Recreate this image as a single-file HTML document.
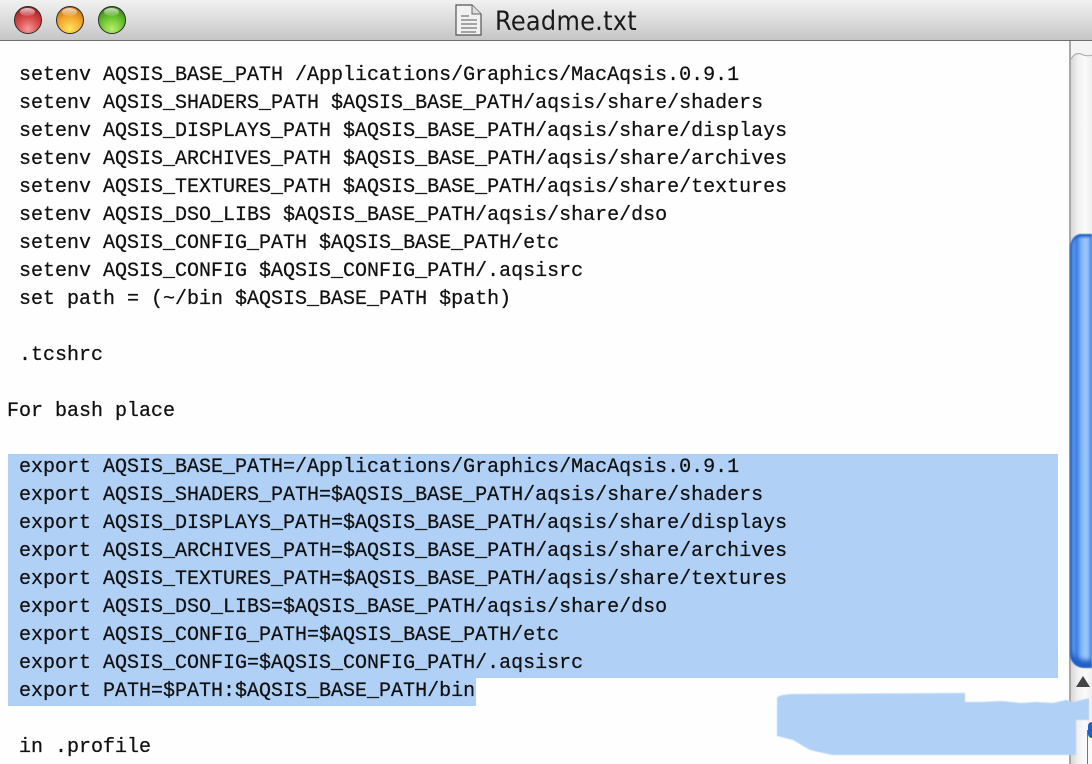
<!DOCTYPE html>
<html><head><meta charset="utf-8">
<style>
html,body{margin:0;padding:0;background:#fff;}
#w{position:relative;width:1092px;height:764px;overflow:hidden;background:#fefefe;}
#t{position:absolute;left:0;top:0;width:1092px;height:40px;background:linear-gradient(#f0f0f0 0,#ededed 10%,#dedede 45%,#cfcfcf 80%,#c6c6c6 100%);border-bottom:1px solid #6e6e6e;}
.b{position:absolute;top:6px;width:28px;height:28px;border-radius:50%;box-sizing:border-box;border:1.5px solid #2b2b2b;overflow:hidden;filter:blur(.3px);}
.b i{position:absolute;left:5px;top:1px;width:15px;height:8px;border-radius:50%;background:linear-gradient(rgba(255,255,255,.75),rgba(255,255,255,.1));}
.l{position:absolute;left:0;font:20px/28px "Liberation Mono",monospace;color:#111;white-space:pre;height:28px;-webkit-text-stroke:.25px #111;filter:blur(.35px);}
.s{position:absolute;background:#b1d0f6;}
#title{position:absolute;left:495px;top:5px;font:27px/34px "DejaVu Sans",sans-serif;color:#1a1a1a;letter-spacing:.3px;transform-origin:0 0;transform:scaleX(.89);filter:blur(.3px);}
</style></head><body><div id="w">
<div id="t"></div>
<div class="b" style="left:14px;background:radial-gradient(circle at 50% 85%,#f49a98 0,#d94a4a 45%,#9c1c20 88%);"><i></i></div>
<div class="b" style="left:56px;background:radial-gradient(circle at 50% 85%,#ffe25e 0,#f2a52e 50%,#b86a10 90%);"><i></i></div>
<div class="b" style="left:98px;background:radial-gradient(circle at 50% 85%,#b6ee6a 0,#66bf2c 50%,#2f7d10 90%);"><i></i></div>
<svg style="position:absolute;left:454px;top:4px" width="29" height="33" viewBox="0 0 29 33"><path d="M2 1H18L27 10V31H2Z" fill="#f1f1f1" stroke="#555" stroke-width="1.2"/><path d="M18 1V10H27" fill="#ddd" stroke="#666"/><path d="M7 12H15M7 16H23M7 20H23M7 24H23M7 28H22" stroke="#777" stroke-width="1.3"/></svg>
<div id="title">Readme.txt</div>

<div class="s" style="left:8px;top:454px;width:1050px;height:224px"></div>
<div class="s" style="left:8px;top:678px;width:468px;height:28px"></div>

<div class="l" style="top:62px;left:19px">setenv AQSIS_BASE_PATH /Applications/Graphics/MacAqsis.0.9.1</div>
<div class="l" style="top:90px;left:19px">setenv AQSIS_SHADERS_PATH $AQSIS_BASE_PATH/aqsis/share/shaders</div>
<div class="l" style="top:118px;left:19px">setenv AQSIS_DISPLAYS_PATH $AQSIS_BASE_PATH/aqsis/share/displays</div>
<div class="l" style="top:146px;left:19px">setenv AQSIS_ARCHIVES_PATH $AQSIS_BASE_PATH/aqsis/share/archives</div>
<div class="l" style="top:174px;left:19px">setenv AQSIS_TEXTURES_PATH $AQSIS_BASE_PATH/aqsis/share/textures</div>
<div class="l" style="top:202px;left:19px">setenv AQSIS_DSO_LIBS $AQSIS_BASE_PATH/aqsis/share/dso</div>
<div class="l" style="top:230px;left:19px">setenv AQSIS_CONFIG_PATH $AQSIS_BASE_PATH/etc</div>
<div class="l" style="top:258px;left:19px">setenv AQSIS_CONFIG $AQSIS_CONFIG_PATH/.aqsisrc</div>
<div class="l" style="top:286px;left:19px">set path = (~/bin $AQSIS_BASE_PATH $path)</div>
<div class="l" style="top:342px;left:19px">.tcshrc</div>
<div class="l" style="top:398px;left:7px">For bash place</div>
<div class="l" style="top:454px;left:19px">export AQSIS_BASE_PATH=/Applications/Graphics/MacAqsis.0.9.1</div>
<div class="l" style="top:482px;left:19px">export AQSIS_SHADERS_PATH=$AQSIS_BASE_PATH/aqsis/share/shaders</div>
<div class="l" style="top:510px;left:19px">export AQSIS_DISPLAYS_PATH=$AQSIS_BASE_PATH/aqsis/share/displays</div>
<div class="l" style="top:538px;left:19px">export AQSIS_ARCHIVES_PATH=$AQSIS_BASE_PATH/aqsis/share/archives</div>
<div class="l" style="top:566px;left:19px">export AQSIS_TEXTURES_PATH=$AQSIS_BASE_PATH/aqsis/share/textures</div>
<div class="l" style="top:594px;left:19px">export AQSIS_DSO_LIBS=$AQSIS_BASE_PATH/aqsis/share/dso</div>
<div class="l" style="top:622px;left:19px">export AQSIS_CONFIG_PATH=$AQSIS_BASE_PATH/etc</div>
<div class="l" style="top:650px;left:19px">export AQSIS_CONFIG=$AQSIS_CONFIG_PATH/.aqsisrc</div>
<div class="l" style="top:678px;left:19px">export PATH=$PATH:$AQSIS_BASE_PATH/bin</div>
<div class="l" style="top:734px;left:19px">in .profile</div>

<div style="position:absolute;left:1069px;top:41px;width:23px;height:723px;border-left:2px solid #a8a8a8;box-sizing:border-box;background:linear-gradient(90deg,#d8d8d8,#f2f2f2 35%,#fafafa 70%,#eee);"></div>
<svg style="position:absolute;left:1071px;top:41px" width="21" height="20"><path d="M0 18Q4 10 10 12Q16 15 21 13V0H0Z" fill="#f4f4f4" stroke="none"/><path d="M0 18Q4 11 10 13Q16 16 21 14" fill="none" stroke="#aaa"/></svg>
<div style="position:absolute;left:1070px;top:234px;width:22px;height:434px;border-radius:11px 0 0 14px/14px 0 0 14px;background:linear-gradient(90deg,#1a56b8 0,#5f9cf0 14%,#3c7fe2 30%,#8abaf5 55%,#9cc8f8 75%,#6aa6ee 100%);box-shadow:inset 0 3px 2px #2463c4,inset 0 -8px 5px #1f5fc6;filter:blur(.5px);"></div>
<svg style="position:absolute;left:1075px;top:674px" width="17" height="16"><path d="M8 2L15 13H1Z" fill="#444"/></svg>
<div style="position:absolute;left:1087px;top:730px;width:5px;height:34px;border-left:1px solid #777;box-sizing:border-box;background:#fafafa;"></div>
<div style="position:absolute;left:1088px;top:722px;width:4px;height:16px;background:#1f5fc6;border-radius:4px 0 0 4px;"></div>

<svg style="position:absolute;left:776px;top:692px;filter:blur(.5px)" width="316" height="66"><path d="M1 6Q3 2 20 2L189 1V10L205 10L225 9L245 11L260 10L277 11L290 8L298 10L313 6V28H300V63H56L34 58L17 48L1 44Z" fill="#b1d0f6"/></svg>
</div></body></html>
